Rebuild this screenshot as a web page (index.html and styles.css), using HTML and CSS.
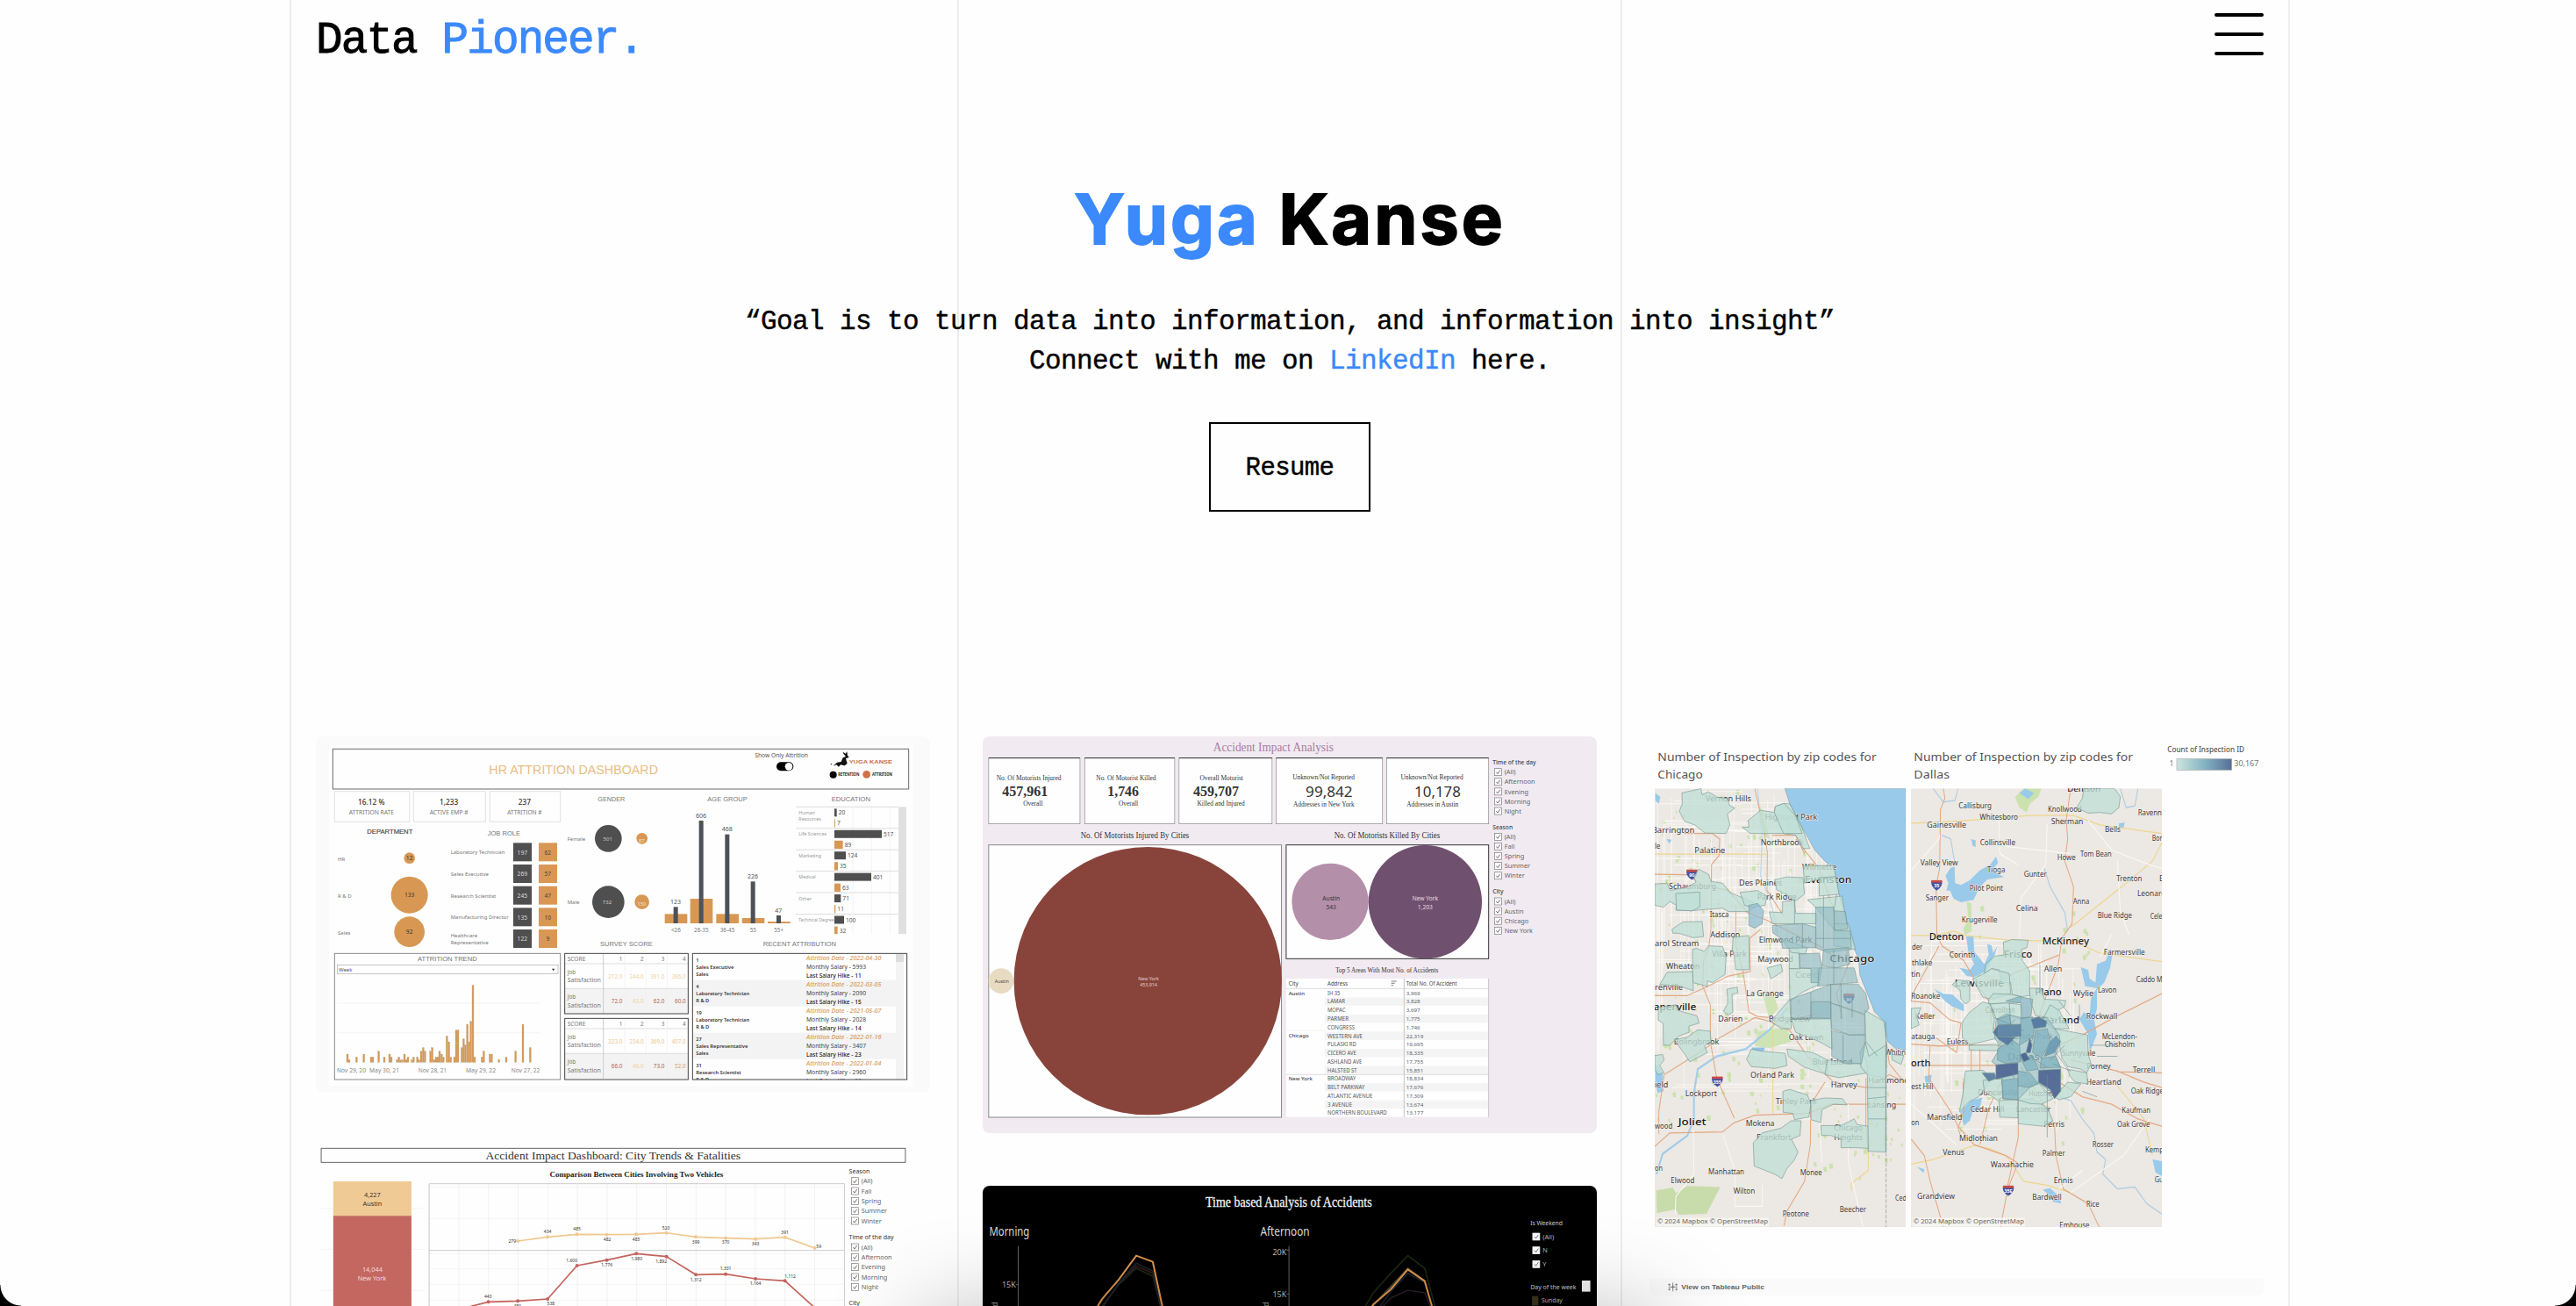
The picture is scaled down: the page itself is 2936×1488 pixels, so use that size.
FILE: index.html
```html
<!DOCTYPE html>
<html lang="en">
<head>
<meta charset="utf-8">
<title>Data Pioneer</title>
<link rel="stylesheet" href="styles.css">
</head>
<body>
<div class="page">
  <header class="header">
    <a class="logo">Data <span class="accent">Pioneer.</span></a>
    <button class="menu" aria-label="Menu"><i></i><i></i><i></i></button>
  </header>
  <section class="hero">
    <h1 class="name"><span class="accent">Yuga</span> Kanse</h1>
    <p class="tagline">“Goal is to turn data into information, and information into insight”<br>Connect with me on <a class="accent">LinkedIn</a> here.</p>
    <a class="resume">Resume</a>
  </section>
  <main class="gallery">
    <div class="column">
      <svg class="card hr" id="hr" viewBox="30 27 2100 1215"></svg>
      <svg class="card trends" id="trends" viewBox="30 42 2100 552"></svg>
    </div>
    <div class="column">
      <svg class="card impact" id="impact" viewBox="30 27 2100 1356"></svg>
      <svg class="card time" id="time" viewBox="30 63 2100 411"></svg>
    </div>
    <div class="column">
      <svg class="card maps" id="maps" viewBox="60 27 2100 1911"></svg>
    </div>
  </main>
</div>
<div class="dock-shadow"></div>
<div class="corner left"></div>
<div class="corner right"></div>
<script src="charts.js"></script>
</body>
</html>
```
FILE: styles.css
```css
* { box-sizing: border-box; }
html, body { height: 100%; }
body { margin: 0; background: #fefefe; color: #000; overflow: hidden; font-family: "Liberation Mono", monospace; }
.accent { color: #3b89fb; }
.page {
  width: 2280px; height: 1488px; margin-left: 330px; padding: 0 30px; overflow: hidden;
  background-image: linear-gradient(#ededed, #ededed), linear-gradient(#ededed, #ededed), linear-gradient(#ededed, #ededed), linear-gradient(#ededed, #ededed);
  background-size: 2px 100%; background-repeat: no-repeat;
  background-position: 0 0, 761px 0, 1517px 0, 2278px 0;
}
.header { display: flex; justify-content: space-between; align-items: flex-start; height: 183px; padding-top: 15px; }
.logo { padding-top: 2px; font-size: 51px; line-height: 60px; letter-spacing: -1.9px; white-space: pre; -webkit-text-stroke: .9px; }
.menu { display: flex; flex-direction: column; gap: 18px; width: 56px; padding: 0; border: 0; background: none; }
.menu i { display: block; height: 4px; border-radius: 2px; background: #000; }
.hero { display: flex; flex-direction: column; align-items: center; height: 656px; }
.name { margin: 16px 0 0; font: 700 79px/100px "Inter", sans-serif; letter-spacing: 3px; white-space: nowrap; -webkit-text-stroke: 1.8px; }
.tagline { margin: 45px 0 0; font-size: 31px; line-height: 45px; letter-spacing: -.6px; text-align: center; -webkit-text-stroke: .4px; }
.resume { margin-top: 47px; width: 184px; height: 102px; border: 2px solid #000; font-size: 29px; line-height: 101px; letter-spacing: -.6px; text-align: center; -webkit-text-stroke: .4px; }
.gallery { display: grid; grid-template-columns: repeat(3, 700px); gap: 60px; align-items: start; }
.column { display: flex; flex-direction: column; gap: 60px; }
.card { display: block; width: 700px; border-radius: 8px; background: #fefefe; font-family: "Noto Sans", sans-serif; }
.hr { height: 405px; background: #fafafa; }
.trends { height: 184px; border-radius: 8px 8px 0 0; }
.impact { height: 452px; background: #f1eaf1; }
.time { height: 137px; background: #000; border-radius: 8px 8px 0 0; }
.maps { height: 637px; }
.dock-shadow { position: absolute; left: 760px; bottom: 0; width: 1420px; height: 180px; overflow: hidden; }
.dock-shadow::after { content: ""; display: block; width: 820px; height: 100px; margin: 200px auto 0; box-shadow: 0 0 110px 10px rgba(0, 0, 0, .28); }
.corner { position: absolute; bottom: 0; width: 24px; height: 24px; }
.corner.left { left: 0; background: radial-gradient(circle at 100% 0, transparent 23px, #000 24px); }
.corner.right { right: 0; background: radial-gradient(circle at 0 0, transparent 23px, #000 24px); }
```
FILE: charts.js
```js
const SERIF = 'Liberation Serif, serif', SANS = 'Liberation Sans, sans-serif';
const attrs = o => Object.entries(o).map(([k, v]) => ` ${k}="${v}"`).join('');
const esc = s => String(s).replace(/&/g, '&amp;').replace(/</g, '&lt;');
const rect = (x, y, w, h, fill, o = {}) => `<rect x="${x}" y="${y}" width="${w}" height="${h}" fill="${fill}"${attrs(o)}/>`;
const circle = (x, y, r, fill) => `<circle cx="${x}" cy="${y}" r="${r}" fill="${fill}"/>`;
const line = (d, stroke, w = 2, o = {}) => `<path d="${d}" fill="none" stroke="${stroke}" stroke-width="${w}"${attrs(o)}/>`;
const poly = (pts, fill, o = {}) => `<polygon points="${pts}" fill="${fill}"${attrs(o)}/>`;
const text = (x, y, s, size, fill = '#666', o = {}) => `<text x="${x}" y="${y}" font-size="${size}" fill="${fill}"${attrs(o)}>${esc(s)}</text>`;
const mid = (x, y, s, size, fill, o = {}) => text(x, y, s, size, fill, { 'text-anchor': 'middle', ...o });
const end = (x, y, s, size, fill, o = {}) => text(x, y, s, size, fill, { 'text-anchor': 'end', ...o });
const fit = (x1, x2, y, s, size, fill, o = {}) => text(x1, y, s, size, fill, { textLength: x2 - x1, lengthAdjust: 'spacingAndGlyphs', ...o });
const check = (x, y, s, dark) => rect(x, y - 12, 24, 24, '#fff', { stroke: dark ? '#fff' : '#777', 'stroke-width': 2 }) +
  line(`M${x + 6} ${y}l5 6l8 -12`, '#555', 2.5) + text(x + 34, y + 8, s, 22, dark ? '#bbb' : '#666');
const put = (id, parts) => { document.getElementById(id).innerHTML = parts.join(''); };

/* HR attrition dashboard */
(() => {
  const O = '#d89853', D = '#4f4f4f', p = [];
  p.push(rect(75, 56, 1997, 1165, '#fefefe'), rect(88, 70, 1969, 137, '#fefefe', { stroke: '#6b6b6b', 'stroke-width': 3 }));
  p.push(fit(622, 1200, 155, 'HR ATTRITION DASHBOARD', 43, '#e8bd85', { 'font-family': SANS }));
  p.push(fit(1531, 1713, 98, 'Show Only Attrition', 21, '#555'), rect(1605, 115, 58, 30, '#000', { rx: 15 }), circle(1647, 130, 13, '#fff'));
  p.push(poly('1799,128 1812,116 1826,114 1832,100 1842,96 1834,86 1832,80 1841,86 1846,79 1848,92 1853,98 1842,103 1847,120 1838,127 1824,124 1818,131 1810,124', '#111'), circle(1792, 122, 2, '#111'));
  p.push(fit(1853, 2001, 120, 'YUGA KANSE', 18, '#cb6a45', { 'font-weight': 800, 'font-family': SANS }));
  p.push(circle(1799, 158, 12, '#000'), fit(1816, 1888, 162, 'RETENTION', 13, '#222', { 'font-weight': 700 }), circle(1913, 157, 13, '#cf7148'), fit(1932, 2001, 162, 'ATTRITION', 13, '#222', { 'font-weight': 700 }));
  [[94, 350, '16.12 %', 'ATTRITION RATE', 154], [364, 610, '1,233', 'ACTIVE EMP #', 132], [625, 866, '237', 'ATTRITION #', 118]].forEach(([a, b, n, l, w]) => {
    const c = (a + b) / 2 - 2;
    p.push(rect(a, 215, b - a, 104, '#fefefe', { stroke: '#e2e2e2', 'stroke-width': 3 }), mid(c, 260, n, 25, '#333', { 'font-weight': 500 }), fit(c - w / 2, c + w / 2, 293, l, 21, '#777'));
  });
  p.push(fit(205, 361, 360, 'DEPARTMENT', 23, '#444', { 'font-family': SANS, stroke: '#444', 'stroke-width': .5 }));
  [[617, 729, 366, 'JOB ROLE'], [994, 1087, 248, 'GENDER'], [1369, 1505, 248, 'AGE GROUP'], [1793, 1926, 248, 'EDUCATION'], [1002, 1181, 744, 'SURVEY SCORE'], [1559, 1809, 744, 'RECENT ATTRIBUTION']].forEach(([a, b, y, s]) => p.push(fit(a, b, y, s, 24, '#777', { 'font-family': SANS })));
  [['HR', 444, 19, 12], ['R & D', 570, 63, 133], ['Sales', 696, 52, 92]].forEach(([l, y, r, n]) => p.push(text(105, y + 8, l, 18, '#777'), circle(350, y - 1, r, O), mid(350, y + 7, n, 20, '#333')));
  [['Laboratory Technician', 197, 62, 185], ['Sales Executive', 269, 57, 130], ['Research Scientist', 245, 47, 155], ['Manufacturing Director', 135, 10, 198], ['', 122, 9, 0]].forEach(([l, a, b, w], i) => {
    const y = 391 + i * 74;
    if (w) p.push(fit(491, 491 + w, y + 39, l, 18, '#777'));
    p.push(rect(705, y, 63, 63, D), rect(792, y, 63, 63, O), mid(736, y + 40, a, 20, '#ddd'), mid(823, y + 40, b, 20, '#444'));
  });
  p.push(fit(491, 582, 713, 'Healthcare', 18, '#777'), fit(491, 620, 738, 'Representative', 18, '#777'));
  p.push(text(890, 384, 'Female', 18, '#777'), text(890, 601, 'Male', 18, '#777'), circle(1030, 376, 46, D), circle(1030, 593, 55, D), mid(1028, 385, 501, 18, '#ccc'), mid(1026, 600, 732, 18, '#ccc'), circle(1145, 376, 19, O), circle(1145, 593, 25, O), mid(1144, 390, 87, 17, '#f5e3cc'), mid(1144, 607, 150, 17, '#f5e3cc'));
  [[1261, 123, 610, 634, '<26'], [1348, 606, 315, 582, '26-35'], [1437, 468, 362, 634, '36-45'], [1525, 226, 523, 648, '55'], [1613, 47, 639, 660, '55+']].forEach(([x, n, y, oy, l]) => p.push(rect(x - 38, oy, 77, 666 - oy, O), rect(x - 8, y, 15, 666 - y, '#4d5158'), mid(x - 1, y - 10, n, 21, '#555'), mid(x, 695, l, 19, '#777')));
  const E = [['Human', 20, 7, 8, 3], ['Life Sciences', 517, 89, 162, 29], ['Marketing', 124, 35, 39, 12], ['Medical', 401, 63, 126, 21], ['Other', 71, 11, 22, 4], ['Technical Degree', 100, 32, 33, 11]];
  [1866, 1930, 1993].forEach(x => p.push(line(`M${x} 268V702`, '#eee', 2)));
  E.forEach(([l, a, b, w1, w2], i) => {
    const y = 268 + i * 73.3;
    p.push(line(`M1671 ${y}H2021`, '#ddd', 3), rect(1803, y + 6, w1, 27, D), rect(1803, y + 42, w2, i == 5 ? 26 : 28, O), text(1809 + w1, y + 27, a, 20, '#555'), text(1809 + w2, y + 63, b, 20, '#555'), i == 5 ? fit(1681, 1802, y + 26, l, 16, '#999') : text(1681, y + 26, l, 16, '#999'));
  });
  p.push(text(1681, 314, 'Resources', 16, '#999'), rect(2022, 268, 27, 434, '#e0e0e0'));
  p.push(rect(94, 769, 772, 431, 'none', { stroke: '#888', 'stroke-width': 3 }), fit(378, 581, 794, 'ATTRITION TREND', 22, '#777', { 'font-family': SANS }), rect(103, 808, 755, 31, '#fff', { stroke: '#aaa', 'stroke-width': 2 }), text(108, 831, 'Week', 18, '#555'), poly('837,821 847,821 842,829', '#333'));
  p.push(line('M103 939H798M103 1040H798', '#eee', 2));
  [[138, 28], [144, 9], [169, 18], [194, 28], [219, 18], [225, 18], [245, 38], [264, 18], [282, 28], [288, 18], [308, 9], [314, 18], [320, 8], [326, 8], [333, 28], [339, 9], [345, 18], [358, 8], [364, 18], [377, 18], [383, 9], [390, 38], [397, 50], [403, 38], [422, 38], [428, 50], [435, 9], [441, 18], [447, 18], [453, 38], [460, 28], [466, 18], [478, 90], [485, 70], [491, 18], [504, 18], [510, 110], [516, 110], [529, 50], [535, 80], [541, 60], [548, 130], [554, 70], [560, 140], [567, 263], [573, 18], [598, 18], [604, 38], [625, 28], [631, 28], [656, 9], [681, 18], [713, 38], [738, 130], [763, 50]].forEach(([x, h]) => p.push(rect(x - 3, 1141 - h, 6, h, O, { stroke: '#bfa98d', 'stroke-width': 1 })));
  [[102, 201, 'Nov 29, 20'], [213, 315, 'May 30, 21'], [380, 478, 'Nov 28, 21'], [543, 645, 'May 29, 22'], [698, 796, 'Nov 27, 22']].forEach(([a, b, s]) => p.push(fit(a, b, 1175, s, 20, '#888')));
  [[769, [['212.0', '#efd2a0'], ['244.0', '#efd2a0'], ['391.0', '#efd2a0'], ['386.0', '#efd2a0']], [['72.0', '#b5654f'], ['43.0', '#efd2a0'], ['62.0', '#b5654f'], ['60.0', '#b5654f']]], [991, [['223.0', '#edc68a'], ['234.0', '#edc68a'], ['369.0', '#edc68a'], ['407.0', '#edc68a']], [['66.0', '#b5654f'], ['46.0', '#efd2a0'], ['73.0', '#b06050'], ['52.0', '#dd9a66']]]].forEach(([y, r1, r2]) => {
    p.push(rect(881, y + 120, 422, 86, '#f3f3f3'), line(`M881 ${y + 35}H1303M881 ${y + 120}H1303`, '#ddd', 3), line(`M1013 ${y}V${y + 206}`, '#ccc', 3), line(`M1086 ${y}V${y + 206}M1159 ${y}V${y + 206}M1231 ${y}V${y + 206}`, '#eee', 2));
    p.push(rect(881, y, 422, y > 900 ? 209 : 206, 'none', { stroke: '#444', 'stroke-width': 3 }), fit(890, 952, y + 26, 'SCORE', 19, '#777'));
    [71, 156].forEach(d => p.push(text(890, y + d, 'Job', 19, '#777'), fit(890, 1005, y + d + 28, 'Satisfaction', 19, '#777')));
    [1078, 1151, 1222, 1295].forEach((x, i) => p.push(end(x, y + 26, i + 1, 19, '#777'), end(x, y + 85, r1[i][0], 19, r1[i][1]), end(x, y + 170, r2[i][0], 19, r2[i][1])));
  });
  let q = '';
  [[1, 'Sales Executive', 'Sales', '2022-04-30', 5993, 11], [4, 'Laboratory Technician', 'R & D', '2022-03-05', 2090, 15], [19, 'Laboratory Technician', 'R & D', '2021-05-07', 2028, 14], [27, 'Sales Representative', 'Sales', '2022-01-16', 3407, 23], [31, 'Research Scientist', 'R & D', '2022-01-04', 2960, 11]].forEach(([n, r, d, dt, s, h], i) => {
    const y = 770 + i * 90, B = { 'font-weight': 600 };
    if (i % 2) q += rect(1320, y, 693, 90, '#f3f3f3');
    q += text(1330, y + 28, n, 17, '#333', B) + fit(1330, 1330 + [129, 182, 182, 177, 154][i], y + 52, r, 17, '#333', B) + text(1330, y + 76, d, 17, '#333', B);
    q += fit(1707, 1963, y + 23, 'Attrition Date - ' + dt, 20, '#d99a55', { 'font-style': 'italic', 'font-weight': 500 }) + fit(1707, 1911, y + 53, 'Monthly Salary - ' + s, 20, '#444') + fit(1707, 1895, y + 83, 'Last Salary Hike - ' + h, 19, '#222', { 'font-weight': 500 });
  });
  p.push(`<svg x="1318" y="769" width="733" height="431" viewBox="1318 769 733 431">${q}</svg>`, rect(2013, 771, 27, 428, '#f3f3f3'), rect(2013, 771, 27, 27, '#ddd'), rect(1318, 769, 733, 431, 'none', { stroke: '#444', 'stroke-width': 3 }));
  put('hr', p);
})();

/* City trends and fatalities */
(() => {
  const k = 1.3776, p = [], X = x => x * k;
  p.push(rect(X(35), 55, X(1450), 48, '#fefefe', { stroke: '#666', 'stroke-width': 3 }), fit(X(443), X(1076), 93, 'Accident Impact Dashboard: City Trends & Fatalities', 38, '#333', { 'font-family': SERIF }));
  p.push(fit(X(602), X(1033), 152, 'Comparison Between Cities Involving Two Vehicles', 26, '#222', { 'font-family': SERIF, 'font-weight': 700 }));
  p.push(line(`M${X(35)} 260H${X(292)}M${X(35)} 400H${X(292)}M${X(35)} 541H${X(292)}`, '#eee', 2), rect(X(65), 168, X(194), 118, '#f0ca95'), rect(X(65), 286, X(194), 400, '#c46760'), rect(X(65), 285, X(194), 3, '#c98a70'));
  p.push(mid(X(162), 221, '4,227', 22, '#333'), mid(X(162), 251, 'Austin', 22, '#333'), mid(X(162), 477, '14,044', 22, '#f3dcda'), mid(X(161), 507, 'New York', 22, '#f3dcda'));
  for (let i = 0; i < 14; i++) p.push(line(`M${X(303 + i * 73.6)} 176V700`, '#ececec', 2));
  p.push(line(`M${X(303)} 187H${X(1334)}M${X(303)} 295H${X(1334)}M${X(303)} 415H${X(1334)}M${X(303)} 467H${X(1334)}M${X(303)} 520H${X(1334)}M${X(303)} 574H${X(1334)}`, '#eee', 2), line(`M${X(303)} 700V176H${X(1334)}V700M${X(303)} 404H${X(1334)}`, '#ccc', 3));
  const series = (pts, c) => { p.push(line('M' + pts.map(([x, y]) => X(x) + ' ' + y).join('L'), c, 5)); pts.forEach(([x, y]) => p.push(circle(X(x), y, 6, c))); };
  series([[523, 372], [597, 358], [670, 349], [744, 350], [817, 349], [892, 344], [965, 358], [1039, 362], [1113, 365], [1186, 359], [1260, 396]], '#f0c890');
  series([[376, 606], [450, 580], [523, 577], [597, 570], [670, 456], [744, 437], [817, 415], [892, 425], [965, 487], [1039, 485], [1113, 501], [1186, 508], [1260, 600]], '#c4625c');
  [[509, 377, 279], [597, 346, 434], [670, 337, 485], [745, 371, 482], [817, 371, 485], [891, 332, 520], [965, 382, 399], [1039, 382, 370], [1113, 386, 343], [1186, 347, 391], [1270, 395, 59], [657, 444, '1,600'], [744, 460, '1,776'], [818, 437, '1,980'], [879, 448, '1,892'], [965, 509, '1,312'], [1039, 472, '1,331'], [1113, 522, '1,164'], [1199, 497, '1,112'], [449, 568, 443], [522, 600, 480], [605, 592, 538]].forEach(([x, y, s]) => p.push(mid(X(x), y, s, 15, '#333')));
  [['Season', 133, ['(All)', 'Fall', 'Spring', 'Summer', 'Winter']], ['Time of the day', 359, ['(All)', 'Afternoon', 'Evening', 'Morning', 'Night']], ['City', 583, []]].forEach(([h, y, l]) => {
    p.push(text(X(1345), y + 7, h, 21, '#333'));
    l.forEach((s, i) => p.push(check(X(1351), y + 34 + i * 34, s)));
  });
  put('trends', p);
})();

/* Accident impact analysis */
(() => {
  const k = 1.1481, p = [], X = x => x * k, S = { 'font-family': SERIF }, SB = { 'font-family': SERIF, 'font-weight': 700 };
  p.push(fit(X(713), X(1071), 78, 'Accident Impact Analysis', 41, '#a87ca3', S));
  [[44, 316], [330, 598], [611, 888], [900, 1217], [1229, 1533]].forEach(([a, b]) => p.push(rect(X(a), 101, X(b - a), 225, '#fefefe', { stroke: '#888', 'stroke-width': 2 }), line(`M${X(a)} 101H${X(b)}`, '#333', 3)));
  [[67, 260, 'No. Of Motorists Injured', 84, 220, '457,961', 147, 205, 'Overall'], [364, 542, 'No. Of Motorist Killed', 398, 491, '1,746', 431, 489, 'Overall'], [673, 802, 'Overall Motorist', 653, 789, '459,707', 665, 807, 'Killed and Injured'], [949, 1134, 'Unknown/Not Reported', 988, 1128, '99,842', 951, 1133, 'Addresses in New York'], [1271, 1457, 'Unknown/Not Reported', 1312, 1450, '10,178', 1289, 1443, 'Addresses in Austin']].forEach(([a, b, s, c, d, n, e, f, t], i) => {
    const j = i > 2 ? 5 : 0;
    p.push(fit(X(a), X(b), 178 - j, s, 23, '#333', S), fit(X(c), X(d), j ? 234 : 230, n, 48, '#333', j ? {} : SB), fit(X(e), X(f), j ? 268 : 263, t, 23, '#333', S));
  });
  p.push(fit(X(318), X(641), 376, 'No. Of Motorists Injured By Cities', 28, '#333', S), fit(X(1073), X(1388), 376, 'No. Of Motorists Killed By Cities', 28, '#333', S));
  p.push(rect(X(44), 398, X(872), 931, '#fefefe', { stroke: '#888', 'stroke-width': 3 }), rect(X(930), 398, X(603), 389, '#fefefe', { stroke: '#333', 'stroke-width': 3 }));
  p.push(circle(X(518), 863, 458, '#88443b'), circle(X(81), 863, 43, '#e8dbc1'), circle(X(1061), 592, 131, '#b48faa'), circle(X(1344), 593, 194, '#70506f'));
  p.push(mid(X(83), 869, 'Austin', 16, '#444'), mid(X(520), 860, 'New York', 16, '#e5cfcc'), mid(X(520), 881, '453,914', 16, '#e5cfcc'), mid(X(1064), 587, 'Austin', 20, '#333'), mid(X(1064), 617, '543', 20, '#333'), mid(X(1344), 587, 'New York', 20, '#e5dbe5'), mid(X(1344), 617, '1,203', 20, '#e5dbe5'));
  p.push(fit(X(1077), X(1383), 834, 'Top 5 Areas With Most No. of Accidents', 22, '#333', S), rect(X(930), 855, X(603), 473, '#fefefe'));
  [['IH 35', '3,969', 43], ['LAMAR', '3,828', 60], ['MOPAC', '3,697', 61], ['PARMER', '1,775', 72], ['CONGRESS', '1,746', 93], ['WESTERN AVE', '22,319', 120], ['PULASKI RD', '19,695', 98], ['CICERO AVE', '18,335', 98], ['ASHLAND AVE', '17,755', 118], ['HALSTED ST', '15,851', 101], ['BROADWAY', '18,834', 97], ['BELT PARKWAY', '17,676', 127], ['ATLANTIC AVENUE', '17,309', 154], ['3 AVENUE', '13,674', 84], ['NORTHERN BOULEVARD', '13,177', 203]].forEach(([a, n, w], i) => {
    const y = 904 + i * 29.3;
    if (i % 2) p.push(rect(1200, y - 14, 560, 28, '#f4f4f4'));
    p.push(fit(1209, 1209 + w, y + 7, a, 19, '#555'), fit(1478, 1478 + (n.length > 5 ? 59 : 48), y + 7, n, 18, '#666'));
  });
  p.push(line('M1068 889H1760M1068 1183H1760', '#ddd', 3), line('M1068 1033H1200', '#eee', 2), line('M1471 855V1328M1760 855V1328', '#c4c4c4', 3));
  p.push(text(1076, 879, 'City', 19, '#444'), fit(1209, 1278, 879, 'Address', 19, '#444'), fit(1478, 1652, 879, 'Total No. Of Accident', 19, '#444'), line('M1427 864H1445M1427 871H1439M1427 878H1434', '#666', 2.5));
  [['Austin', 904], ['Chicago', 1050], ['New York', 1197]].forEach(([s, y]) => p.push(text(1076, y + 7, s, 18, '#444', { 'font-weight': 500 })));
  [['Time of the day', 116, ['(All)', 'Afternoon', 'Evening', 'Morning', 'Night']], ['Season', 337, ['(All)', 'Fall', 'Spring', 'Summer', 'Winter']], ['City', 558, ['(All)', 'Austin', 'Chicago', 'New York']]].forEach(([h, y, l]) => {
    p.push(text(1774, y + 7, h, 20, '#444', { 'font-weight': 500 }));
    l.forEach((s, i) => p.push(check(1780, y + 33 + i * 33.3, s)));
  });
  put('impact', p);
})();

/* Time based analysis */
(() => {
  const k = 1.3776, p = [], X = x => x * k, P = a => 'M' + a.map(([x, y]) => X(x) + ' ' + y).join('L');
  p.push(fit(X(575), X(988), 135, 'Time based Analysis of Accidents', 47, '#f2f2f2', { 'font-family': SERIF, stroke: '#f2f2f2', 'stroke-width': .8 }));
  p.push(fit(X(38), X(138), 235, 'Morning', 44, '#ddd'), fit(X(711), X(833), 235, 'Afternoon', 44, '#ddd'));
  p.push(line(`M${X(110)} 269V600M${X(104)} 401H${X(110)}M${X(782)} 269V600M${X(776)} 283H${X(782)}M${X(776)} 433H${X(782)}`, '#999', 2));
  p.push(end(X(104), 411, '15K', 27, '#bbb'), end(X(776), 300, '20K', 27, '#bbb'), end(X(776), 443, '15K', 27, '#bbb'));
  p.push(line(P([[310, 490], [360, 400], [403, 345], [444, 372], [466, 490]]), '#1d2a17', 5), line(P([[312, 490], [360, 395], [403, 337], [444, 362], [466, 490]]), '#381a17', 5), line(P([[314, 490], [362, 392], [403, 328], [444, 354], [467, 490]]), '#1b2330', 5), line(P([[300, 490], [319, 449], [360, 383], [403, 302], [444, 323], [470, 490]]), '#de984c', 6));
  p.push(line(P([[965, 490], [992, 428], [1035, 362], [1077, 302], [1119, 345], [1147, 490]]), '#1b2914', 5), line(P([[1005, 490], [1035, 446], [1077, 420], [1119, 429], [1138, 490]]), '#281d29', 5), line(P([[1000, 490], [1035, 425], [1077, 362], [1119, 394], [1142, 490]]), '#1c2431', 5), line(P([[990, 472], [1035, 408], [1077, 346], [1119, 388]]), '#4a4536', 6), line(P([[980, 490], [992, 468], [1035, 417], [1077, 349], [1119, 389], [1140, 490]]), '#de984c', 6));
  [52, 726].forEach(x => p.push(`<text transform="translate(${X(x + 6)} 476) rotate(-90)" font-size="25" fill="#aaa">d</text>`));
  p.push(fit(X(1381), X(1461), 199, 'Is Weekend', 23, '#ccc'), check(X(1387), 237, '(All)', 1), check(X(1387), 284, 'N', 1), check(X(1387), 331, 'Y', 1));
  p.push(fit(X(1381), X(1495), 417, 'Day of the week', 23, '#ccc'), rect(X(1509), 387, 29, 38, '#f2f2f2'), rect(X(1385), 440, 22, 32, '#3a351d'), fit(X(1409), X(1461), 463, 'Sunday', 22, '#bbb'));
  put('time', p);
})();

/* Inspection maps. Geometry is kept in a squeezed vertical unit, labels in plain units. */
(() => {
  const V = 1.259;
  const road = (d, c = '#e2a882', w = 3) => line(d, c, w, { 'stroke-linejoin': 'round' });
  const zip = (pts, f = '#bfdfd6', o = .78) => poly(pts, f, { 'fill-opacity': o, stroke: '#75928f', 'stroke-width': 1.6 });
  const label = ([x1, x2, y, s, size = 24]) => fit(x1, x2, (y + 1) * V + 6, s, size, size > 26 ? '#1c1c1c' : '#3c3c3c', { stroke: '#f3efea', 'stroke-width': 3, 'paint-order': 'stroke', 'font-weight': size > 26 ? 500 : 400 });
  const shield = (x, y, s) => `<path d="M${x - 18} ${(y - 12) * V}h36q5 20 -18 34q-23 -14 -18 -34z" fill="#4453a2"/>` + rect(x - 18, (y - 13) * V, 36, 8, '#c84a45') + mid(x, y * V + 9, s, 16, '#fff', { 'font-weight': 700 });
  let seed = 7;
  const rnd = () => (seed = (seed * 16807) % 2147483647) / 2147483647;
  const patches = (n, x, y, w, h) => Array.from({ length: n }, () => { const a = x + rnd() * w, b = y + rnd() * h, s = 4 + rnd() * 9; return poly(`${a},${b} ${a + s},${b - 2} ${a + s + 2},${b + s} ${a + 3},${b + s + 1}`, '#cbe2ae'); }).join('');
  const streets = (n, x, y, w, h) => Array.from({ length: n }, (_, i) => i % 2 ? road(`M${x + rnd() * w} ${y + rnd() * h * .4}v${h * (.2 + rnd() * .4)}`, '#faf8f5', 2.5) : road(`M${x + rnd() * w * .5} ${y + rnd() * h}h${w * (.2 + rnd() * .4)}`, '#faf8f5', 2.5)).join('');
  const map = (x, geo, labels, over, extra) => `<svg x="${x}" y="205" width="858" height="1500" viewBox="${x} 205 858 1500">` + rect(x, 205, 858, 1500, '#ece8e3') + `<g transform="scale(1 ${V})">${geo}</g>${labels}<g transform="scale(1 ${V})">${over}</g>${extra}</svg>`;

  const chiGeo = patches(150, 80, 165, 560, 900) + patches(40, 560, 900, 370, 330) + streets(150, 80, 170, 620, 830) + streets(50, 600, 420, 240, 560) +
    poly('83,1254 140,1246 150,1262 190,1242 302,1245 255,1318 160,1320 150,1305 85,1316', '#c8dcab') + poly('430,822 530,812 545,850 470,868 420,862', '#cfe3b4') + poly('450,730 480,712 500,760 470,790', '#cfe3b4') + poly('430,200 450,290 470,300 452,230', '#cfe3b4') +
    poly('523,163 540,205 580,265 625,330 662,362 690,378 705,440 718,480 737,530 755,590 775,625 780,670 805,720 830,770 862,795 875,850 900,868 936,873 936,163', '#99caea', { stroke: '#7b98a5', 'stroke-width': 1.5 }) +
    line('M84 1210L105 1155L190 1105L212 1060L212 990L225 925L290 890L390 870L475 815L530 760', '#a3cdea', 6) + line('M430 163L445 300L440 400L478 480L500 560', '#b5d5e8', 3) +
    poly('410,866 455,866 450,876 412,874', '#8fc1e6') + poly('80,910 105,935 108,985 88,990 80,960', '#99caea') + poly('80,175 97,186 92,205 80,195', '#99caea') + poly('118,300 136,302 128,313', '#99caea') +
    road('M78 341H460', '#edd68c') + road('M482 780V1045', '#edd68c') + road('M808 1130V1200L750 1235V1255', '#edd68c') + road('M78 426L150 418', '#edd68c') +
    road('M78 396L190 397L240 425L330 440L395 500L460 520L560 560L640 590L700 625') + road('M420 163L450 270L463 335L462 440L520 510') + road('M180 285L275 285L300 300L298 345L272 370L270 545L262 600L245 630L242 700L268 750L268 850L290 950L350 1058') + road('M78 725L190 725L260 700L330 672L405 660L402 570L440 545') + road('M355 480V590L380 660L400 770L430 782L540 790L640 775') + road('M300 840L420 785L470 795L540 820L600 890L650 930L690 960L800 975L880 940L936 960') + road('M92 1100V1040L110 940L240 875L300 840') + road('M78 1135L130 1098L310 1095L350 1070L420 1050L600 1045L680 1020H936') + road('M520 1350L530 1310L590 1230L610 1130L612 1020L660 960') + road('M560 300L640 380L680 470L730 580L740 640L700 720L720 790') + road('M480 290L560 290L590 340') + road('M870 850L880 910L930 960') + road('M800 950V1080L808 1150') +
    line('M869 900V1354', '#999', 2, { 'stroke-dasharray': '10 4' }) + road('M210 1090L212 1210L150 1270L148 1320', '#faf8f5') + road('M310 1100L352 1200V1297H446V1240', '#faf8f5') + road('M740 1020V1180L790 1354', '#faf8f5') + road('M580 1060L640 1060L650 1180', '#faf8f5');
  const chiLabels = [[252, 408, 193, 'Vernon Hills'], [455, 634, 243, 'Highland Park'], [68, 214, 278, 'Barrington'], [78, 97, 320, 'le'], [440, 586, 311, 'Northbrook'], [214, 319, 333, 'Palatine'], [582, 700, 378, 'Wilmette'], [590, 751, 414, 'Evanston', 34], [366, 513, 421, 'Des Plaines'], [126, 288, 431, 'Schaumburg'], [428, 563, 460, 'Park Ridge'], [266, 331, 507, 'Itasca'], [268, 370, 561, 'Addison'], [434, 616, 575, 'Elmwood Park'], [78, 229, 585, 'arol Stream'], [274, 392, 614, 'Villa Park'], [430, 552, 627, 'Maywood'], [676, 829, 629, 'Chicago', 34], [117, 232, 646, 'Wheaton'], [559, 638, 670, 'Cicero'], [78, 174, 705, 'renville'], [391, 518, 721, 'La Grange'], [74, 220, 760, 'aperville', 34], [295, 379, 790, 'Darien'], [467, 610, 790, 'Bridgeview'], [536, 655, 841, 'Oak Lawn'], [143, 298, 853, 'Bolingbrook'], [866, 950, 880, 'Whiting'], [617, 754, 907, 'Blue Island'], [405, 555, 942, 'Orland Park'], [680, 770, 968, 'Harvey'], [808, 948, 958, 'Hammond'], [78, 124, 969, 'ield'], [182, 291, 993, 'Lockport'], [491, 632, 1014, 'Tinley Park'], [806, 904, 1023, 'Lansing'], [158, 254, 1071, 'Joliet', 34], [389, 487, 1074, 'Mokena'], [78, 139, 1081, 'wood'], [691, 789, 1085, 'Chicago'], [426, 545, 1111, 'Frankfort'], [691, 789, 1111, 'Heights'], [78, 105, 1195, 'on'], [261, 384, 1204, 'Manhattan'], [575, 650, 1208, 'Monee'], [133, 214, 1228, 'Elwood'], [347, 421, 1258, 'Wilton'], [900, 950, 1276, 'Ceda'], [710, 801, 1307, 'Beecher'], [515, 606, 1318, 'Peotone']].map(label).join('') + shield(205, 396, '90') + shield(292, 958, '355') + shield(742, 733, '94');
  const M = '#92bcc4', chiOver = ['171,175 236,163 240,180 262,172 290,186 325,190 335,210 352,216 326,232 335,262 322,285 250,284 215,262 180,252 162,225 172,205', '377,268 400,268 397,250 440,222 487,228 490,212 520,203 540,205 582,270 608,326 585,326 560,290 515,285 405,285', '487,228 490,212 520,203 560,238 582,285 518,285', '78,422 120,420 132,440 190,430 218,418 212,402 228,382 262,396 270,415 310,420 335,445 410,470 430,480 398,497 330,497 310,488 240,492 205,495 150,493 152,480 130,470 108,485 78,480', '150,448 232,444 232,485 205,495 152,493', '370,445 430,440 462,455 455,480 410,485 385,480', '137,545 175,525 240,524 245,565 210,568 160,556 140,556', '207,600 220,597 248,605 262,590 310,592 322,620 318,668 275,690 258,685 258,700 208,690', '95,695 120,662 208,660 210,712 165,700 130,697', '346,567 400,562 401,655 355,655 350,620 343,600', '325,708 360,702 362,718 342,722 345,770 330,778 313,768 328,745', '90,757 150,750 155,765 222,780 230,800 195,808 195,825 160,835 130,860 108,860 106,800 90,792', '145,845 190,838 225,818 268,822 270,850 248,862 258,880 198,905 172,875', '78,888 105,885 110,900 95,915 110,935 88,940 78,925', '408,870 440,876 525,882 530,915 490,923 408,918 392,898', '516,985 540,980 600,995 612,1020 605,1055 556,1062 550,1045 517,1042', '612,1010 660,1003 720,1005 735,1022 690,1020 650,1035 645,1070 612,1062', '415,1125 445,1098 510,1085 545,1065 578,1065 575,1105 545,1115 568,1150 555,1172 530,1195 513,1222 488,1210 418,1188', '646,1078 715,1078 760,1060 770,1075 808,1080 810,1140 760,1138 715,1138 715,1115 680,1105 648,1105', '488,410 530,403 585,405 590,450 556,470 530,452 495,438', '585,372 690,372 698,405 660,405 590,420', '640,405 698,402 708,450 640,455', '515,470 556,465 560,502 630,502 630,530 480,530 470,498 515,500', '600,465 718,455 735,530 690,545 628,485', '538,600 570,600 575,655 538,652', '538,652 635,650 640,695 585,715 540,740', '512,572 600,595 592,612 545,608', '690,530 740,530 765,600 690,590', '463,650 510,640 515,660 475,680', '475,795 540,735 543,790 545,815 510,815', '545,790 680,788 685,870 640,850 560,825', '530,870 620,880 668,900 670,940 590,920 535,890', '668,900 780,910 805,935 708,948 660,940', '796,765 862,795 872,870 868,950 808,940 800,900 780,880 800,850', '780,880 798,852 810,890 868,860 868,1150 808,1148 805,940 783,920', '888,885 930,888 920,912 890,900'].map(s => zip(s)).join('') +
    ['480,535 583,530 630,540 630,595 515,597 510,570 482,555', '628,485 690,485 692,548 748,550 750,600 668,608 628,595', '692,495 730,497 738,545 692,548', '573,612 640,610 650,650 640,690 612,690 612,652 573,650', '640,650 760,650 772,690 680,695 635,700', '543,735 680,695 680,785 545,788', '680,695 775,695 800,720 810,760 795,775 680,745', '612,742 680,742 680,788 612,786', '683,820 745,832 796,830 796,860 785,910 730,910 683,890', '680,745 796,778 796,832 745,832 683,815', '655,600 740,595 745,640 700,650 650,645'].map(s => zip(s, M, .68)).join('') +
    zip('400,480 430,475 450,495 445,530 420,542 400,535', '#92bcd0', .75) + line('M583 530V596M655 485V596M628 570H750M690 600V695M612 715V788M715 695V788M753 740V785M722 832V910M556 465V530M655 455V485M700 450L690 495M800 850L840 890', '#6f9399', 1.6) + line('M869 795V1150M808 975H869M808 1060H869M805 1005L869 1000', '#6f9399', 1.6);

  const D = x => x + 900;
  const g = s => s.replace(/(-?\d+),(-?\d+)/g, (_, a, b) => `${+a + 900},${b}`);
  const dalGeo = '<g transform="translate(900 0)">' + patches(70, 180, 480, 480, 650) + streets(110, 60, 570, 560, 540) +
    poly('410,185 440,163 500,163 490,185 460,205 450,228 425,215', '#cbe2ae') + poly('425,175 445,163 475,175 455,192', '#99caea') +
    poly('172,400 190,378 203,375 205,420 225,425 255,412 290,385 325,370 345,348 352,365 330,385 372,403 315,410 290,430 268,465 225,472 200,462 188,440 175,440 182,420', '#99caea') + poly('243,565 268,565 270,605 305,640 320,615 315,585 330,590 335,610 350,590 340,615 310,660 270,675 245,672 220,650 255,655 270,640 250,605', '#99caea') + poly('245,470 260,475 262,550 240,560 232,545 250,520', '#cbe2ae') +
    poly('133,707 165,720 195,722 235,750 235,768 195,755 170,740', '#99caea') + poly('635,648 660,655 665,680 685,690 690,640 720,630 735,600 745,605 735,650 715,690 690,710 690,760 680,790 690,830 665,880 660,830 630,790 645,770 665,780 670,730 690,705 650,700', '#99caea') +
    poly('222,1040 260,1010 298,1002 290,1030 265,1040 255,1065 235,1078', '#99caea') + poly('260,300 275,303 275,322 265,318', '#99caea') + poly('505,1252 530,1248 560,1270 568,1290 540,1285 530,1270', '#99caea') + poly('880,1170 912,1175 912,1215 890,1205', '#99caea') + poly('765,258 785,255 780,272 765,270', '#99caea') + poly('100,945 125,940 120,965 105,965', '#99caea') + poly('75,1190 100,1197 97,1207', '#99caea') +
    line('M560 1000L600 1010L640 1060L680 1100L690 1150L720 1170L710 1210L760 1250L820 1245L860 1290L912 1318M160 290L190 300L205 370M510 380L530 430L580 500L590 550M770 163L790 215L820 210L830 163M130 163L165 200L205 195L215 163', '#a9cbe3', 3) +
    road('M55 257L160 254L330 245L460 236L610 236L700 262L912 285', '#edd68c') + road('M912 310L880 360L790 420L600 540', '#edd68c') + road('M55 562L140 562L200 550L240 562L380 574L520 577L600 575L700 610L912 633', '#edd68c') + road('M55 1183L130 1170L270 1132L320 1140L380 1160L440 1230L520 1240L600 1260', '#edd68c') + road('M750 960L800 1010L850 1060L880 1160', '#edd68c') +
    road('M165 163L170 190L155 220L152 380L140 430L143 560L160 590L235 630L270 680L320 740L330 800L370 870L420 940') + road('M600 163L585 250L590 300L580 360L610 430L605 530L570 570L558 640L530 700L500 760L470 860L440 900') + road('M150 590L60 720L55 740L120 745L185 790L225 800L210 880L140 840') + road('M55 857L150 862L260 860L380 862L430 880') + road('M55 915L360 915L440 900L560 860L640 832L760 780L912 720') + road('M120 860L115 950L190 1040L215 1080L270 1130L380 1160L420 1180L385 1250L360 1354') + road('M232 960L235 1040L215 1085L225 1110M260 870V930M290 870V930') + road('M420 930L421 1110L385 1240') + road('M430 920L500 1010L545 1080L550 1160L575 1250L660 1290L698 1354') + road('M470 900L560 960L640 1000L740 1020L830 1060L912 1080') + road('M600 900L760 930L850 960L912 975M760 932L912 935') + road('M55 1115L100 1160L120 1230L165 1354') + road('M340 690L420 660L560 615M380 930L320 1030L290 1130') +
    road('M55 385L150 300L152 290M355 250L358 340L420 370M520 260L515 370L430 460L425 570M380 320L600 340M660 250L740 330L870 370L912 380M760 360L770 500L800 560M60 690L140 600M700 620L740 560M55 1020L210 1130M640 1200L560 1250M600 1260L780 1160L870 1060', '#faf8f5') + '</g>';
  const dalLabels = [[589, 702, 165, 'Denison', 29], [217, 330, 210, 'Callisburg'], [522, 638, 220, 'Knollwood'], [830, 925, 229, 'Ravenna'], [289, 420, 241, 'Whitesboro'], [533, 643, 253, 'Sherman'], [109, 243, 264, 'Gainesville'], [717, 771, 275, 'Bells'], [878, 930, 299, 'Bonh'], [290, 411, 312, 'Collinsville'], [633, 740, 343, 'Tom Bean'], [554, 617, 352, 'Howe'], [86, 215, 367, 'Valley View'], [315, 376, 384, 'Tioga'], [440, 518, 398, 'Gunter'], [757, 844, 410, 'Trenton'], [903, 930, 409, 'Ec'], [254, 369, 436, 'Pilot Point'], [828, 925, 449, 'Leonard'], [104, 183, 461, 'Sanger'], [608, 664, 471, 'Anna'], [413, 488, 489, 'Celina'], [692, 810, 509, 'Blue Ridge'], [872, 930, 512, 'Celest'], [227, 350, 522, 'Krugerville'], [116, 235, 568, 'Denton', 33], [503, 663, 581, 'McKinney', 33], [57, 94, 595, 'der'], [713, 854, 610, 'Farmersville'], [185, 274, 616, 'Corinth'], [372, 469, 616, 'Frisco', 32], [57, 127, 637, 'thlake'], [509, 571, 655, 'Allen'], [55, 86, 668, 'tin'], [824, 940, 683, 'Caddo Mills'], [203, 372, 694, 'Lewisville', 32], [693, 757, 711, 'Lavon'], [478, 569, 719, 'Plano', 32], [608, 679, 720, 'Wylie'], [55, 154, 728, 'Roanoke'], [308, 410, 766, 'Carrollton'], [68, 137, 784, 'Keller'], [653, 760, 782, 'Rockwall'], [500, 630, 794, 'Garland', 32], [55, 136, 838, 'atauga'], [350, 540, 838, 'University Park'], [707, 828, 838, 'McLendon-'], [176, 250, 853, 'Euless'], [716, 819, 860, 'Chisholm'], [569, 685, 883, 'Sunnyvale'], [384, 494, 894, 'Dallas', 34], [54, 121, 911, 'orth', 33], [655, 737, 919, 'Forney'], [812, 889, 928, 'Terrell'], [653, 773, 962, 'Heartland'], [55, 131, 974, 'est Hill'], [806, 918, 986, 'Oak Ridge'], [283, 421, 990, 'Duncanville'], [457, 550, 992, 'Hutchins'], [257, 373, 1036, 'Cedar Hill'], [413, 532, 1035, 'Lancaster'], [775, 873, 1037, 'Kaufman'], [109, 229, 1056, 'Mansfield'], [55, 82, 1071, 'on'], [508, 579, 1077, 'Ferris'], [759, 871, 1077, 'Oak Grove'], [219, 351, 1115, 'Midlothian'], [674, 747, 1131, 'Rosser'], [855, 918, 1146, 'Kemp'], [163, 237, 1152, 'Venus'], [503, 581, 1154, 'Palmer'], [326, 474, 1186, 'Waxahachie'], [887, 950, 1227, 'Gun B'], [542, 608, 1229, 'Ennis'], [75, 204, 1272, 'Grandview'], [469, 569, 1274, 'Bardwell'], [653, 698, 1292, 'Rice'], [562, 664, 1351, 'Emhouse']].map(([a, b, ...r]) => label([D(a), D(b), ...r])).join('') + shield(D(142), 425, '35') + shield(D(387), 1254, '35E');
  const core = '345,790 380,775 430,785 520,785 560,830 565,850 548,890 566,922 566,985 545,1005 530,985 490,962 460,975 420,1008 368,1006 365,950 345,952 345,913 330,905 360,865 340,840';
  const L = ['640,190 645,163 750,163 770,185 765,215 740,232 700,228 660,230 620,215', '370,580 400,573 455,575 450,595 432,600 435,630 460,658 460,725 432,728 400,722 395,690 365,690 355,655 330,652 305,665 310,640 340,618 372,615', '265,680 305,665 330,652 355,658 390,665 395,720 330,735 300,730', '320,735 335,720 395,722 432,728 425,745 320,748', '195,695 215,683 255,685 255,740 240,748 225,735 222,710', '55,760 88,758 75,785 82,805 55,815', '255,770 300,742 325,748 340,790 335,820 345,842 255,858 230,840 228,800 240,785', '325,748 380,745 430,750 430,790 390,778 345,790 338,770', '253,860 350,858 358,875 253,873', '460,705 500,705 510,735 583,738 580,755 555,765 560,790 530,785 480,780 462,740', '530,750 560,765 595,815 540,815 505,790', '545,815 658,832 660,885 670,910 655,935 635,925 590,918 570,895 560,850', '240,930 300,928 330,948 300,985 285,1000 250,1015 220,1040 232,990', '300,955 365,950 370,1000 350,1010 305,985', '355,1010 420,1008 420,1057 358,1055', '421,1010 470,1005 520,1030 540,1065 508,1080 421,1073', '590,925 655,935 660,965 615,960 598,945', '545,1000 590,960 635,965 600,1000 560,1008', '420,970 490,962 540,1005 500,1020 460,1018 420,1008'];
  const B = ['378,740 425,728 470,735 465,780 435,790 430,745', '350,790 390,778 395,805 352,803', '430,786 470,783 475,820 470,838 425,860', '350,870 400,845 425,860 430,905 380,910 350,900', '500,895 550,890 565,920 495,922', '420,930 460,935 490,965 455,975 420,970', '365,955 420,950 420,1008 370,1005', '480,820 520,815 530,850 500,895 470,880', '430,895 470,890 490,925 450,930'];
  const N = [['352,805 430,803 430,835 352,838', '#587fa3'], ['335,825 352,805 352,838 410,838 385,860 355,845', '#51719e'], ['465,790 490,783 518,795 515,810 475,815', '#4e769d'], ['510,890 530,850 550,835 565,850 545,880', '#6897b4'], ['460,840 468,860 462,880 448,880', '#47608f'], ['428,885 445,880 460,898 440,905', '#47608f'], ['345,913 420,908 420,938 345,952', '#4c6391'], ['297,935 340,935 345,950 320,958', '#55799e'], ['490,928 565,925 565,985 545,1005 530,980 490,960', '#4c6391']];
  const dalOver = L.map(s => zip(g(s))).join('') + zip(g(core), '#9cc5ca', .72) + B.map(s => zip(g(s), '#7fb1c0', .7)).join('') + N.map(([s, c]) => zip(g(s), c, .9)).join('') + line('M1240 785L1340 820M1250 840L1310 790M1290 745L1300 860M1395 640V720M1305 930V950M1460 740L1500 780M1530 750V790M1570 860H1658M1590 890H1660M1420 940V1110M1360 890L1420 920M1430 900L1480 860M1440 910L1500 930M1440 870L1490 925M1540 985L1590 1000', '#6d8d93', 1.6);

  const credit = x => rect(x + 5, 1672, 385, 30, '#f8f6f3', { 'fill-opacity': .8 }) + fit(x + 8, x + 387, 1692, '© 2024 Mapbox  © OpenStreetMap', 22, '#666');
  const p = [map(78, chiGeo, chiLabels, chiOver, credit(78)), map(954, dalGeo, dalLabels, dalOver, credit(954))];
  [[88, 836, 'Number of Inspection by zip codes for', 110], [88, 242, 'Chicago', 170], [964, 1713, 'Number of Inspection by zip codes for', 110], [964, 1086, 'Dallas', 170]].forEach(([a, b, s, y]) => p.push(fit(a, b, y, s, 38, '#555')));
  p.push('<defs><linearGradient id="scale"><stop stop-color="#cbe5de"/><stop offset=".5" stop-color="#85b3c3"/><stop offset="1" stop-color="#566e97"/></linearGradient></defs>', fit(1831, 2094, 80, 'Count of Inspection ID', 24, '#555', { 'font-weight': 500 }), text(1838, 130, '1', 24, '#777'), rect(1863, 104, 188, 38, 'url(#scale)', { stroke: '#aaa', 'stroke-width': 2 }), fit(2059, 2143, 130, '30,167', 24, '#777'));
  p.push(rect(60, 1881, 2100, 57, '#fafafa'), line('M140 1894V1924M125 1909H155M128 1897V1905M124 1901H132M152 1897V1905M148 1901H156M128 1913V1921M124 1917H132M152 1913V1921M148 1917H156M134 1909H146M140 1903V1915', '#777', 2.5), fit(169, 453, 1917, 'View on Tableau Public', 23, '#666', { 'font-weight': 700, 'font-family': SANS }));
  put('maps', p);
})();
```
